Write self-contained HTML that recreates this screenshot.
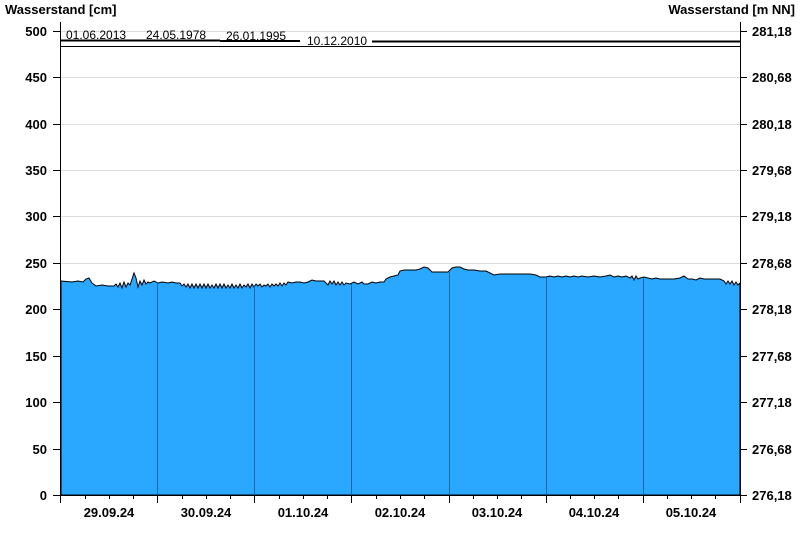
<!DOCTYPE html>
<html><head><meta charset="utf-8"><style>
body{margin:0;background:#fff;width:800px;height:550px;overflow:hidden}
svg{display:block}
text{font-family:"Liberation Sans",Arial,sans-serif}
.b{font-weight:bold;font-size:13px;fill:#000}
.s{font-size:12px;fill:#000}
</style></head><body>
<svg width="800" height="550" viewBox="0 0 800 550">
<g stroke="#ddd" stroke-width="1">
<line x1="61" y1="31.5" x2="740" y2="31.5"/>
<line x1="61" y1="77.5" x2="740" y2="77.5"/>
<line x1="61" y1="124.5" x2="740" y2="124.5"/>
<line x1="61" y1="170.5" x2="740" y2="170.5"/>
<line x1="61" y1="216.5" x2="740" y2="216.5"/>
<line x1="61" y1="263.5" x2="740" y2="263.5"/>
<line x1="61" y1="309.5" x2="740" y2="309.5"/>
<line x1="61" y1="356.5" x2="740" y2="356.5"/>
<line x1="61" y1="402.5" x2="740" y2="402.5"/>
<line x1="61" y1="449.5" x2="740" y2="449.5"/>
</g>
<path d="M61,281 L72,282 L78,281 L83,282 L86,279 L89,278 L92,283 L96,286 L102,285 L108,286 L114,286 L116,284 L118,287 L120,283 L122,288 L124,282 L126,287 L128,283 L130,285 L132,279 L134,273 L136,278 L138,287 L140,281 L142,285 L144,280 L146,284 L148,282 L150,283 L154,281 L158,283 L162,282 L168,283 L172,282 L176,283 L180,283 L182,286 L184,284 L186,287 L188,284 L190,288 L192,284 L194,288 L196,284 L198,288 L200,284 L202,288 L204,284 L206,288 L208,284 L210,288 L212,285 L214,288 L216,284 L218,288 L220,284 L222,288 L224,284 L226,288 L228,285 L230,288 L232,284 L234,288 L236,285 L238,288 L240,284 L242,288 L244,285 L246,287 L248,284 L250,288 L252,284 L254,287 L256,284 L258,286 L260,284 L262,287 L264,285 L266,286 L268,284 L270,287 L272,284 L274,286 L276,284 L278,286 L280,283 L282,286 L284,283 L286,285 L288,282 L292,283 L296,282 L300,282 L304,283 L308,282 L312,280 L316,281 L320,281 L324,281 L326,283 L328,285 L330,281 L332,284 L334,281 L336,285 L338,282 L340,285 L342,282 L344,285 L346,283 L350,284 L354,282 L358,284 L362,282 L364,284 L368,284 L372,282 L376,283 L380,282 L384,282 L386,279 L390,277 L394,276 L398,275 L400,271 L404,270 L410,270 L416,270 L420,269 L424,267 L428,268 L432,272 L440,272 L448,272 L452,268 L456,267 L460,267 L464,269 L468,270 L474,270 L480,271 L486,271 L490,273 L494,275 L500,274 L510,274 L520,274 L530,274 L536,275 L540,277 L546,277 L550,276 L554,277 L558,276 L562,277 L566,276 L570,277 L574,276 L578,277 L582,276 L588,277 L594,276 L600,277 L606,276 L610,275 L614,277 L618,276 L622,277 L626,276 L630,278 L632,276 L634,280 L636,276 L638,279 L640,278 L644,277 L648,278 L652,279 L656,278 L660,279 L664,279 L668,279 L674,279 L680,278 L684,276 L688,279 L692,279 L696,280 L700,278 L704,279 L708,279 L714,279 L720,279 L724,281 L726,284 L728,281 L730,284 L732,281 L734,285 L736,282 L738,285 L740,283 L740,495 L61,495 Z" fill="#2aa8ff" stroke="#000" stroke-width="1"/>
<g stroke="#1a6aa0" stroke-width="1">
<line x1="157.5" y1="282" x2="157.5" y2="495"/>
<line x1="254.5" y1="285" x2="254.5" y2="495"/>
<line x1="351.5" y1="284" x2="351.5" y2="495"/>
<line x1="449.5" y1="272" x2="449.5" y2="495"/>
<line x1="546.5" y1="277" x2="546.5" y2="495"/>
<line x1="643.5" y1="278" x2="643.5" y2="495"/>
</g>
<g stroke="#000">
<line x1="61" y1="40.5" x2="220" y2="40.5" stroke-width="2"/>
<line x1="220" y1="41" x2="300" y2="41" stroke-width="2"/>
<line x1="372" y1="41.5" x2="740" y2="41.5" stroke-width="2"/>
<line x1="61" y1="46.5" x2="740" y2="46.5" stroke-width="1"/>
<line x1="61" y1="495.5" x2="740" y2="495.5" stroke-width="1"/>
<line x1="60.5" y1="22" x2="60.5" y2="503" stroke-width="1"/>
<line x1="740.5" y1="22" x2="740.5" y2="503" stroke-width="1"/>
</g>
<g stroke="#000" stroke-width="1">
<path d="M53,31.5H61M53,77.5H61M53,124.5H61M53,170.5H61M53,216.5H61M53,263.5H61M53,309.5H61M53,356.5H61M53,402.5H61M53,449.5H61M53,495.5H61"/>
<path d="M740,31.5H747M740,77.5H747M740,124.5H747M740,170.5H747M740,216.5H747M740,263.5H747M740,309.5H747M740,356.5H747M740,402.5H747M740,449.5H747M740,495.5H747"/>
<path d="M157.5,495V503M254.5,495V503M351.5,495V503M449.5,495V503M546.5,495V503M643.5,495V503"/>
<path d="M85.5,495V499M109.5,495V499M133.5,495V499M182.5,495V499M206.5,495V499M230.5,495V499M279.5,495V499M303.5,495V499M327.5,495V499M376.5,495V499M400.5,495V499M424.5,495V499M473.5,495V499M497.5,495V499M521.5,495V499M570.5,495V499M594.5,495V499M618.5,495V499M667.5,495V499M691.5,495V499M715.5,495V499"/>
</g>
<text class="b" x="5" y="14">Wasserstand [cm]</text>
<text class="b" x="795" y="14" text-anchor="end">Wasserstand [m NN]</text>
<text class="s" x="66" y="39">01.06.2013</text>
<text class="s" x="146" y="39">24.05.1978</text>
<text class="s" x="226" y="40">26.01.1995</text>
<text class="s" x="307" y="45">10.12.2010</text>
<g class="b" text-anchor="end">
<text x="47" y="36">500</text><text x="47" y="82">450</text><text x="47" y="129">400</text><text x="47" y="175">350</text><text x="47" y="221">300</text><text x="47" y="268">250</text><text x="47" y="314">200</text><text x="47" y="361">150</text><text x="47" y="407">100</text><text x="47" y="454">50</text><text x="47" y="500">0</text>
</g>
<g class="b">
<text x="752" y="36">281,18</text><text x="752" y="82">280,68</text><text x="752" y="129">280,18</text><text x="752" y="175">279,68</text><text x="752" y="221">279,18</text><text x="752" y="268">278,68</text><text x="752" y="314">278,18</text><text x="752" y="361">277,68</text><text x="752" y="407">277,18</text><text x="752" y="454">276,68</text><text x="752" y="500">276,18</text>
</g>
<g class="b" text-anchor="middle">
<text x="109" y="517">29.09.24</text><text x="206" y="517">30.09.24</text><text x="303" y="517">01.10.24</text><text x="400" y="517">02.10.24</text><text x="497" y="517">03.10.24</text><text x="594" y="517">04.10.24</text><text x="691" y="517">05.10.24</text>
</g>
</svg>
</body></html>
